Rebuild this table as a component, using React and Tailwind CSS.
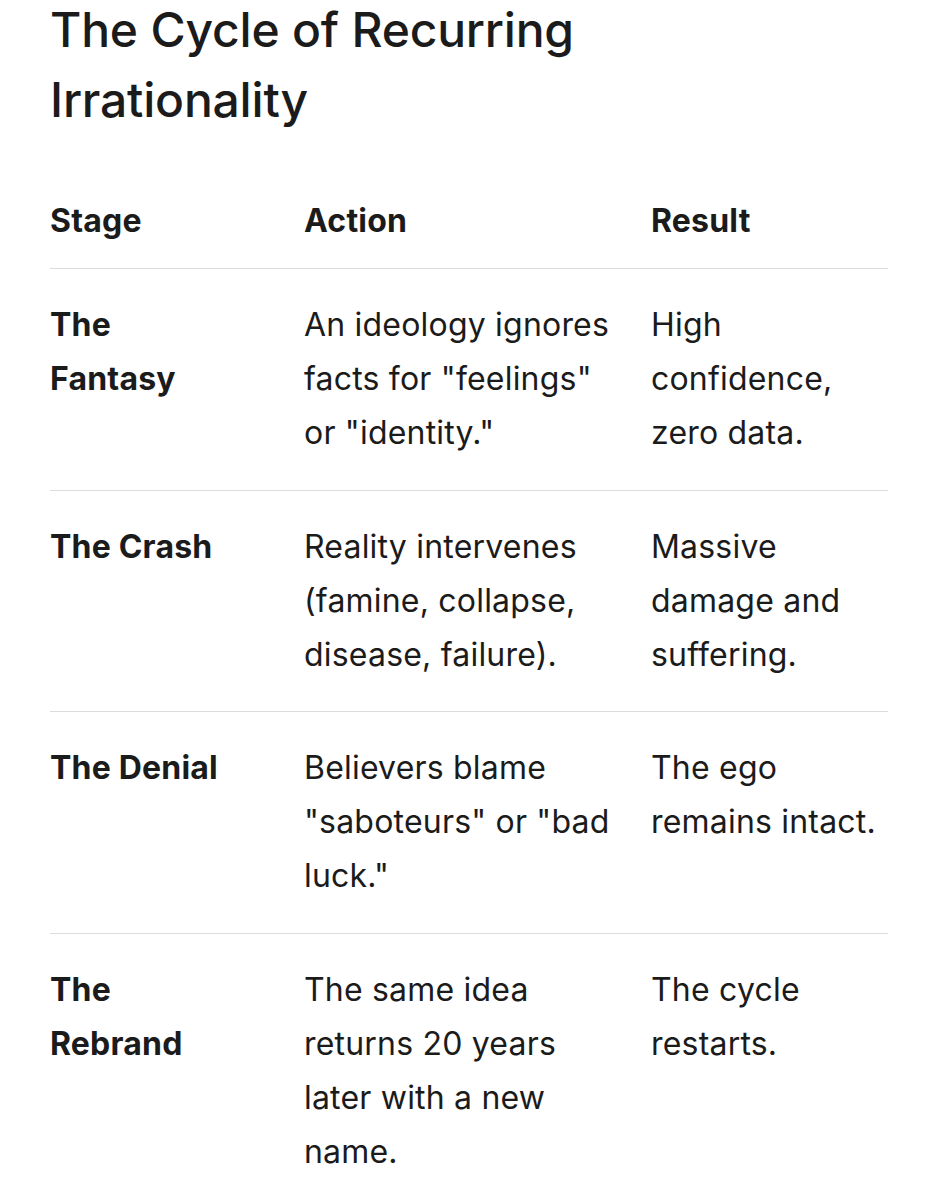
import React from 'react';

const rows = [
  {
    stage: 'The Fantasy',
    action: 'An ideology ignores facts for "feelings" or "identity."',
    result: 'High confidence, zero data.',
  },
  {
    stage: 'The Crash',
    action: 'Reality intervenes (famine, collapse, disease, failure).',
    result: 'Massive damage and suffering.',
  },
  {
    stage: 'The Denial',
    action: 'Believers blame "saboteurs" or "bad luck."',
    result: 'The ego remains intact.',
  },
  {
    stage: 'The Rebrand',
    action: 'The same idea returns 20 years later with a new name.',
    result: 'The cycle restarts.',
  },
];

const App = () => {
  return (
    <div className="min-h-[1200px] bg-white px-[50px] text-[#1b1b1b] font-['Inter',sans-serif]">
      {/* Titulo */}
      <h1 className="-mt-[5px] text-[48px] leading-[70px] font-medium tracking-[-0.2px]">
        The Cycle of Recurring
        <br />
        Irrationality
      </h1>

      <table className="mt-[59px] w-[838px] table-fixed border-collapse text-[32px] leading-[54px] tracking-[0.2px]">
        <colgroup>
          <col className="w-[254px]" />
          <col className="w-[347px]" />
          <col className="w-[237px]" />
        </colgroup>
        <thead>
          <tr className="border-b border-[#dcdcdc]">
            <th className="pb-[20px] pr-[74px] text-left align-top font-bold">Stage</th>
            <th className="pb-[20px] pr-[32px] text-left align-top font-bold">Action</th>
            <th className="pb-[20px] pr-[7px] text-left align-top font-bold">Result</th>
          </tr>
        </thead>
        <tbody>
          {rows.map((row, i) => (
            <tr key={row.stage} className={i < rows.length - 1 ? 'border-b border-[#dcdcdc]' : ''}>
              <td className="pt-[29px] pb-[29.5px] pr-[74px] align-top font-bold">{row.stage}</td>
              <td className="pt-[29px] pb-[29.5px] pr-[32px] align-top">{row.action}</td>
              <td className="pt-[29px] pb-[29.5px] pr-[7px] align-top">{row.result}</td>
            </tr>
          ))}
        </tbody>
      </table>
    </div>
  );
};

export default App;
